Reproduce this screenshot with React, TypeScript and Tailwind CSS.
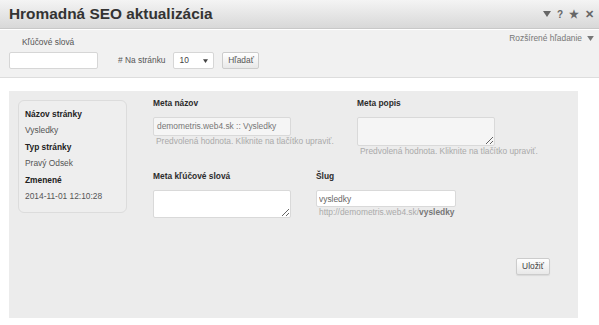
import { useState } from "react";

const font = "font-['Liberation_Sans',Arial,sans-serif]";

function Field({ label, children }: { label: string; children: React.ReactNode }) {
  return (
    <div className="flex flex-col">
      <div className="text-[8.4px] font-bold leading-[12px] text-[#2b2b2b]">{label}</div>
      <div className="mt-[8px]">{children}</div>
    </div>
  );
}

function Help({ children }: { children: React.ReactNode }) {
  return <div className="text-[8.4px] leading-[11px] text-[#aaaaaa] pl-[3px] whitespace-nowrap">{children}</div>;
}

export default function App() {
  const [keywords, setKeywords] = useState("");
  const [slug, setSlug] = useState("vysledky");

  const info = [
    { label: "Názov stránky", value: "Vysledky" },
    { label: "Typ stránky", value: "Pravý Odsek" },
    { label: "Zmenené", value: "2014-11-01 12:10:28" },
  ];

  return (
    <div className={`${font} w-[599px] h-[325px] bg-white overflow-hidden`}>
      {/* Title bar */}
      <div className="h-[29px] flex items-center justify-between pl-[9px] pr-[5px] bg-gradient-to-b from-[#f4f4f4] to-[#d8d8d8] border-b border-[#c8c8c8]">
        <h1 className="text-[15.4px] font-bold text-[#333333]">Hromadná SEO aktualizácia</h1>
        <div className="flex items-center gap-[6px] text-[#666666] font-bold">
          <svg width="8" height="6" viewBox="0 0 8 6"><path d="M0 0h8L4 6z" fill="currentColor" /></svg>
          <span className="text-[10px]">?</span>
          <span className="text-[11px]">★</span>
          <span className="text-[11px]">✕</span>
        </div>
      </div>

      {/* Search */}
      <div className="mt-px h-[48px] bg-[#f1f1f1] border-b border-[#dddddd] relative pl-[9px]">
        <div className="absolute right-[5px] top-[2px] flex items-center gap-[5px] text-[8.4px] text-[#777777]">
          Rozšírené hľadanie
          <svg width="7" height="5" viewBox="0 0 8 6"><path d="M0 0h8L4 6z" fill="currentColor" /></svg>
        </div>
        <div className="text-[8.4px] text-[#555555] pl-[13px] pt-[7px] leading-[11px]">Kľúčové slová</div>
        <div className="flex items-center mt-[4px]">
          <input
            value={keywords}
            onChange={(e) => setKeywords(e.target.value)}
            className="w-[89px] h-[17px] bg-white border border-[#d6d6d6] rounded-[2px] outline-none text-[8.4px] px-1"
          />
          <span className="ml-[20px] text-[8.4px] text-[#555555]"># Na stránku</span>
          <div className="ml-[8px] w-[41px] h-[17px] bg-white border border-[#d6d6d6] rounded-[2px] flex items-center justify-between px-[5px] text-[8.4px] text-[#444444]">
            <span>10</span>
            <svg width="5" height="4" viewBox="0 0 8 6"><path d="M0 0h8L4 6z" fill="currentColor" /></svg>
          </div>
          <button className="ml-[8px] w-[37px] h-[17px] rounded-[2px] border border-[#cccccc] bg-gradient-to-b from-white to-[#e8e8e8] text-[8.4px] text-[#555555]">
            Hľadať
          </button>
        </div>
      </div>

      {/* Main panel */}
      <div className="ml-[9px] mt-[13px] w-[569px] h-[227px] bg-[#ececec] flex pl-[9px] pt-[6px]">
        <div className="shrink-0 mt-[3px] w-[109px] h-[113px] border border-[#dcdcdc] rounded-[6px] bg-[#eeeeee] px-[6px] pt-[5px]">
          {info.map((row) => (
            <div key={row.label}>
              <div className="text-[8.4px] font-bold text-[#222222] leading-[16px]">{row.label}</div>
              <div className="text-[8.4px] text-[#555555] leading-[17px]">{row.value}</div>
            </div>
          ))}
        </div>

        <div className="shrink-0 ml-[26px] flex flex-col">
          <div className="flex">
            <div className="w-[204px] shrink-0">
              <Field label="Meta názov">
                <div className="w-[138px] h-[19px] bg-[#f5f5f5] border border-[#d9d9d9] rounded-[2px] flex items-center px-[3px] text-[8.4px] text-[#777777]">
                  demometris.web4.sk :: Vysledky
                </div>
                <Help>Predvolená hodnota. Kliknite na tlačítko upraviť.</Help>
              </Field>
            </div>
            <Field label="Meta popis">
              <textarea className="block w-[138px] h-[29px] bg-[#f5f5f5] border border-[#d9d9d9] rounded-[2px] outline-none" />
              <Help>Predvolená hodnota. Kliknite na tlačítko upraviť.</Help>
            </Field>
          </div>

          <div className="flex mt-[13px]">
            <div className="w-[163px] shrink-0">
              <Field label="Meta kľúčové slová">
                <textarea className="block w-[138px] h-[28px] bg-white border border-[#d9d9d9] rounded-[2px] outline-none" />
              </Field>
            </div>
            <Field label="Šlug">
              <input
                value={slug}
                onChange={(e) => setSlug(e.target.value)}
                className="block w-[140px] h-[17px] bg-white border border-[#d9d9d9] rounded-[2px] outline-none px-[2px] text-[8.4px] text-[#666666]"
              />
              <Help>
                http://demometris.web4.sk/<b className="text-[#777777]">vysledky</b>
              </Help>
            </Field>
          </div>

          <div className="flex justify-end mt-[40px] w-[397px]">
            <button className="w-[34px] h-[17px] rounded-[2px] border border-[#cccccc] bg-gradient-to-b from-white to-[#e8e8e8] text-[8.4px] text-[#444444] shadow-[0_1px_1px_rgba(0,0,0,0.08)]">
              Uložiť
            </button>
          </div>
        </div>
      </div>
    </div>
  );
}
